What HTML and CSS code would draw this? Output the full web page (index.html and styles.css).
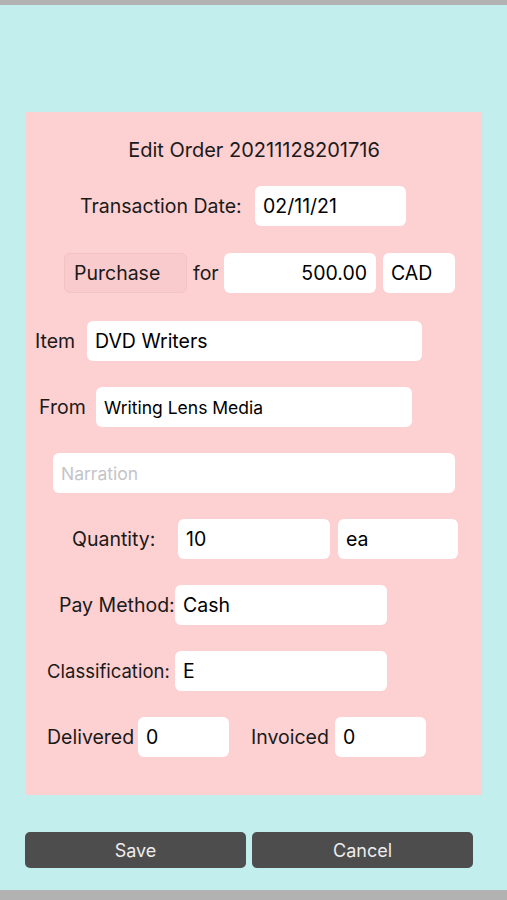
FILE: index.html
```html
<!DOCTYPE html>
<html lang="en">
<head>
    <meta charset="UTF-8">
    <meta name="viewport" content="width=device-width, initial-scale=1.0">
    <title>Edit Order</title>
    <link rel="stylesheet" href="styles.css">
</head>
<body>
    <div class="top-bar"></div>

    <div class="panel">
        <h1 class="title">Edit Order 20211128201716</h1>

        <div class="rows">
            <div class="row row-date">
                <label class="label label-date">Transaction Date:</label>
                <input class="field field-date" type="text" value="02/11/21" readonly>
            </div>

            <div class="row row-amount">
                <div class="type-box">Purchase</div>
                <span class="label label-for">for</span>
                <input class="field field-amount" type="text" value="500.00" readonly>
                <input class="field field-currency" type="text" value="CAD" readonly>
            </div>

            <div class="row row-item">
                <label class="label label-item">Item</label>
                <input class="field field-item" type="text" value="DVD Writers" readonly>
            </div>

            <div class="row row-from">
                <label class="label label-from">From</label>
                <input class="field field-from" type="text" value="Writing Lens Media" readonly>
            </div>

            <div class="row row-narration">
                <input class="field field-narration" type="text" placeholder="Narration">
            </div>

            <div class="row row-qty">
                <label class="label label-qty">Quantity:</label>
                <input class="field field-qty" type="text" value="10" readonly>
                <input class="field field-unit" type="text" value="ea" readonly>
            </div>

            <div class="row row-pay">
                <label class="label label-pay">Pay Method:</label>
                <input class="field field-wide" type="text" value="Cash" readonly>
            </div>

            <div class="row row-class">
                <label class="label label-class">Classification:</label>
                <input class="field field-wide" type="text" value="E" readonly>
            </div>

            <div class="row row-status">
                <label class="label label-delivered">Delivered</label>
                <input class="field field-small" type="text" value="0" readonly>
                <label class="label label-invoiced">Invoiced</label>
                <input class="field field-small" type="text" value="0" readonly>
            </div>
        </div>
    </div>

    <div class="actions">
        <button class="btn">Save</button>
        <button class="btn">Cancel</button>
    </div>

    <div class="bottom-bar"></div>
</body>
</html>
```

FILE: styles.css
```css
body {
    font-family: 'Inter', 'Liberation Sans', sans-serif;
    background-color: #c2eeee;
    margin: 0;
    height: 900px;
    overflow: hidden;
    color: #1a1a1a;
}
.top-bar {
    height: 5px;
    background-color: #b2b2b2;
}
.bottom-bar {
    height: 10px;
    margin-top: 22px;
    background-color: #b2b2b2;
}
.panel {
    box-sizing: border-box;
    width: 456px;
    height: 683px;
    margin: 107px 0 0 26px;
    padding-top: 26px;
    background-color: #fdd0d1;
}
.title {
    margin: 0;
    height: 24px;
    line-height: 24px;
    font-size: 20px;
    font-weight: 400;
    text-align: center;
    color: #1a1a1a;
}
.rows {
    display: flex;
    flex-direction: column;
    gap: 26px;
    margin-top: 24px;
}
.row {
    display: flex;
    align-items: center;
    height: 40px;
}
.label {
    font-size: 19.5px;
    white-space: nowrap;
    flex: none;
}
.field {
    box-sizing: border-box;
    height: 40px;
    padding: 0 8px;
    border: none;
    border-radius: 6px;
    background-color: #fff;
    font-family: inherit;
    font-size: 19.5px;
    color: #000;
    outline: none;
    flex: none;
}
.field::placeholder {
    color: #c4c4c8;
}

/* transaction date */
.row-date { padding-left: 54px; }
.label-date { width: 175px; }
.field-date { width: 151px; }

/* type / amount / currency */
.row-amount { padding-left: 38px; margin-top: 1px; }
.type-box {
    box-sizing: border-box;
    width: 123px;
    height: 40px;
    line-height: 38px;
    padding-left: 9px;
    border: 1px solid #f3c3c4;
    border-radius: 6px;
    background-color: #f9cbcc;
    font-size: 19.5px;
}
.label-for { width: 37px; padding-left: 6px; box-sizing: border-box; }
.field-amount { width: 152px; text-align: right; margin-right: 7px; padding-right: 9px; }
.field-currency { width: 72px; }

.row-item { padding-left: 9px; margin-top: 2px; }
.label-item { width: 52px; }
.field-item { width: 335px; }

.row-from { padding-left: 13px; }
.label-from { width: 57px; }
.field-from { width: 316px; font-size: 17.5px; }

.row-narration { padding-left: 27px; }
.field-narration { width: 402px; font-size: 17.5px; }

.row-qty { padding-left: 46px; }
.label-qty { width: 106px; }
.field-qty { width: 152px; margin-right: 8px; }
.field-unit { width: 120px; }

.row-pay { padding-left: 33px; }
.label-pay { width: 116px; }

.row-class { padding-left: 21px; }
.label-class { width: 128px; font-size: 18.5px; }
.field-wide { width: 212px; }

.row-status { padding-left: 21px; }
.label-delivered { width: 91px; }
.label-invoiced { width: 84px; margin-left: 22px; }
.field-small { width: 91px; }

/* bottom buttons */
.actions {
    display: flex;
    gap: 6px;
    margin: 37px 0 0 25px;
}
.btn {
    width: 221px;
    height: 36px;
    border: none;
    border-radius: 5px;
    background-color: #4d4d4d;
    color: #ececec;
    font-family: inherit;
    font-size: 18px;
}
```
